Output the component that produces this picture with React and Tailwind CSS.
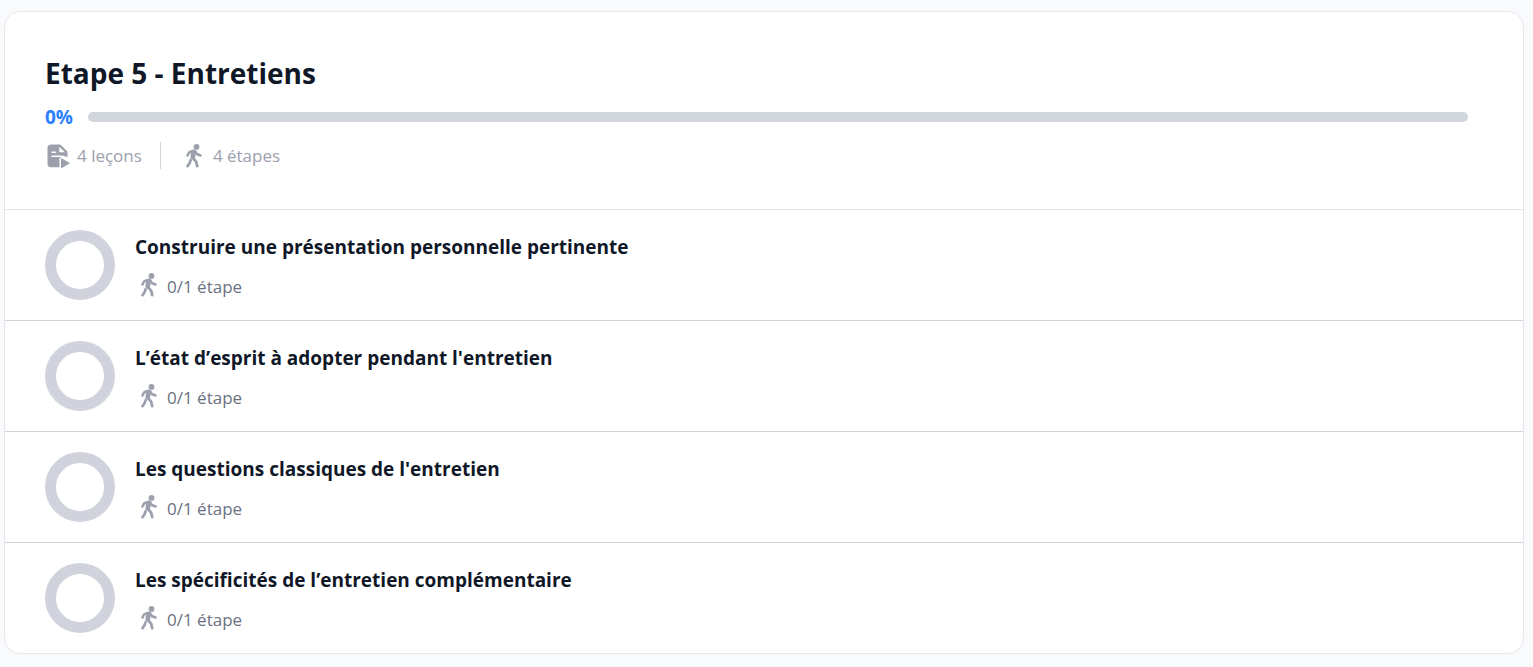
import React from 'react'

const lessons = [
  { title: 'Construire une présentation personnelle pertinente', steps: '0/1 étape' },
  { title: 'L’état d’esprit à adopter pendant l\'entretien', steps: '0/1 étape' },
  { title: 'Les questions classiques de l\'entretien', steps: '0/1 étape' },
  { title: 'Les spécificités de l’entretien complémentaire', steps: '0/1 étape' },
]

const LessonIcon = () => (
  <svg aria-hidden="true" className="w-[25px] h-6" viewBox="-1 0 25 24" fill="none" xmlns="http://www.w3.org/2000/svg">
    <path fill="currentColor" d="M5 .5h9.300L21.500 7.500V14l-6-1.500-2 2V23.300H5a3.500 3.500 0 0 1-3.500-3.500V4A3.500 3.500 0 0 1 5 .5Z" />
    <path fill="white" d="M13.300 2.800v5.400h5.700Z" />
    <path stroke="white" strokeWidth="1.500" strokeLinecap="round" d="M6 8.200h3.500M6 12.200h5.500c2.500 0 3.500-.3 5.500.2l5.500 1.800" />
    <path stroke="white" strokeWidth="3" strokeLinejoin="round" d="M15.500 15v8.500l7.500-4.300Z" />
    <path fill="currentColor" stroke="currentColor" strokeLinejoin="round" d="M15.500 14.700v9l7.700-4.500Z" />
  </svg>
)

const StepIcon = () => (
  <svg aria-hidden="true" className="w-4 h-6 shrink-0" viewBox="0 0 16 24" fill="none" stroke="currentColor" strokeLinecap="round" strokeLinejoin="round" xmlns="http://www.w3.org/2000/svg">
    <circle cx="10.500" cy="2.900" r="2.900" fill="currentColor" stroke="none" />
    <path strokeWidth="2.500" d="M1.500 11.500 2.600 9.200Q3 8.300 4 7.900L7 6.900Q9.200 6.500 10 8.500L10.700 10 14.500 11.500" />
    <path strokeWidth="2.500" fill="currentColor" d="M6.200 7.800 8.800 8 7.800 13.700 5.700 14Z" />
    <path strokeWidth="2.800" d="M6.800 14 9.600 17Q10.200 17.600 10.400 18.500L11.200 22.200" />
    <path strokeWidth="2.700" d="M4.600 16.200 3.800 18.700 1.500 22.200" />
  </svg>
)

const Lesson = ({ title, steps }) => (
  <li className="flex items-start gap-5 px-10 py-5 border-t border-[#d1d3dc] first:border-gray-200">
    <div className="w-[70px] h-[70px] shrink-0 rounded-full border-[11px] border-[#d1d3dc]"></div>
    <div>
      <h3 className="text-[19px] leading-[34px] font-bold text-gray-900">{title}</h3>
      <div className="flex items-start gap-[10px] mt-[9px] pl-[6px]">
        <span className="text-[#9ca0ad]">
          <StepIcon />
        </span>
        <span className="text-[17px] leading-[27px] text-gray-500">{steps}</span>
      </div>
    </div>
  </li>
)

export default function App() {
  return (
    <main className="min-h-screen pt-[11px] pl-1 pr-[9px] pb-3 bg-gray-50 font-['Open_Sans','Noto_Sans',sans-serif]">
      <section className="bg-white rounded-2xl border border-gray-200">
        <header className="p-10">
          <h2 className="text-[28px] leading-[42px] font-bold text-gray-900">Etape 5 - Entretiens</h2>
          <div className="flex items-center gap-[15px] mt-[9px] pr-[15px]">
            <span id="progress-value" className="text-[19px] leading-7 font-bold text-blue-500">0%</span>
            <div role="progressbar" aria-labelledby="progress-value" aria-valuenow={0} aria-valuemin={0} aria-valuemax={100} className="h-[10px] grow rounded-full bg-gray-300"></div>
          </div>
          <div className="flex items-center mt-[11px] text-[17px] leading-[27px] text-[#9ca0ad]">
            <div className="flex items-center gap-[7px] pr-[18px] border-r border-gray-300">
              <LessonIcon />
              <span>4 leçons</span>
            </div>
            <div className="flex items-center gap-[11px] pl-[25px]">
              <StepIcon />
              <span>4 étapes</span>
            </div>
          </div>
        </header>
        <ul>
          {lessons.map((lesson) => (
            <Lesson key={lesson.title} {...lesson} />
          ))}
        </ul>
      </section>
    </main>
  )
}
